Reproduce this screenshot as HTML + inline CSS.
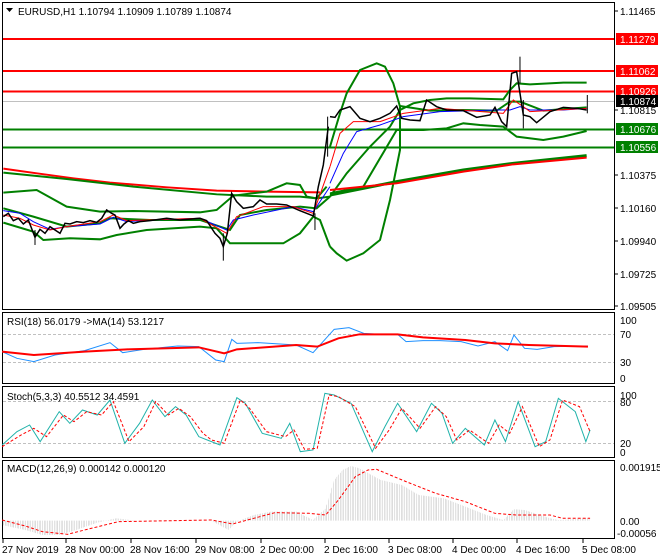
<!DOCTYPE html>
<html><head><meta charset="utf-8"><style>
body{margin:0;background:#fff;width:660px;height:560px;overflow:hidden;font-family:"Liberation Sans",sans-serif}
svg{position:absolute;left:0;top:0}
text{font-family:"Liberation Sans",sans-serif;font-size:10px;fill:#000}
.p{fill:none;vector-effect:non-scaling-stroke}
</style></head><body>
<svg width="660" height="560" viewBox="0 0 660 560">
<defs>
<pattern id="hb" width="4" height="10" patternUnits="userSpaceOnUse"><rect x="0" y="0" width="1" height="10" fill="#b8b8b8"/></pattern>
</defs>
<rect x="2.5" y="2.5" width="612" height="307" fill="none" stroke="#000"/>
<rect x="2.5" y="312.5" width="612" height="71" fill="none" stroke="#000"/>
<rect x="2.5" y="386.5" width="612" height="71" fill="none" stroke="#000"/>
<rect x="2.5" y="460.5" width="612" height="78" fill="none" stroke="#000"/>
<line x1="3" y1="101.5" x2="614" y2="101.5" stroke="#c0c0c0"/>
<line x1="3" y1="39" x2="614" y2="39" stroke="#f00" stroke-width="2"/>
<line x1="3" y1="71" x2="614" y2="71" stroke="#f00" stroke-width="2"/>
<line x1="3" y1="91.5" x2="614" y2="91.5" stroke="#f00" stroke-width="2"/>
<line x1="3" y1="129.5" x2="614" y2="129.5" stroke="#008000" stroke-width="2"/>
<line x1="3" y1="147.5" x2="614" y2="147.5" stroke="#008000" stroke-width="2"/>
<g transform="scale(0.3333)">
<polyline class="p" stroke="#f00" stroke-width="2" points="10,506 110,520 220,535 330,548 500,562 650,572 800,575 960,577"/>
<polyline class="p" stroke="#008000" stroke-width="2" points="10,518 200,537 400,560 650,583 800,590 900,590 950,595 990,590"/>
<polyline class="p" stroke="#008000" stroke-width="2" points="10,578 110,570 200,620 300,635 400,633 600,637 650,630 700,587 800,575 860,550 900,555 920,590 950,595 980,560"/>
<polyline class="p" stroke="#008000" stroke-width="2" points="10,668 100,695 130,720 210,715 300,718 350,705 440,690 600,680 650,685 690,730 850,730 900,700 940,650 960,660 990,740"/>
<polyline class="p" stroke="#008000" stroke-width="2" points="10,625 100,650 200,680 300,670 330,655 450,660 600,660 690,690 720,645 800,630 900,620 950,625 990,590"/>
<polyline class="p" stroke="#00f" stroke-width="1" points="10,632 60,640 100,665 150,688 200,680 300,672 340,652 380,665 450,660 600,655 680,690 700,660 760,645 880,620 940,635 990,560"/>
<polyline class="p" stroke="#f00" stroke-width="1" points="10,645 60,655 100,675 150,690 200,680 300,665 340,645 380,662 600,655 680,700 710,650 790,620 880,620 940,640 990,500"/>
<polyline class="p" stroke="#000" stroke-width="1.5" points="10,650 25,640 40,662 55,655 70,672 85,660 105,712 120,688 135,700 150,680 165,690 180,700 195,670 210,672 230,665 250,668 270,662 290,667 305,655 320,630 335,640 345,645 360,685 372,672 385,662 400,670 420,665 450,662 500,655 540,660 600,655 620,662 645,700 660,715 670,740 682,700 695,580 710,605 730,625 760,620 780,600 800,612 830,612 860,615 900,632 920,640 940,648 955,560 970,495 985,380"/>
<polyline class="p" stroke="#000" stroke-width="1" points="105,690 105,735"/>
<polyline class="p" stroke="#000" stroke-width="1" points="670,700 670,782"/>
<polyline class="p" stroke="#000" stroke-width="1" points="945,640 945,690"/>
<polyline class="p" stroke="#000" stroke-width="1" points="983,350 983,470"/>
</g>
<g transform="translate(330,0) scale(0.3333)">
<polyline class="p" stroke="#008000" stroke-width="2" points="0,440 30,340 50,280 90,210 140,190 165,200 190,250 210,320 210,450 180,600 150,720 100,760 50,782 20,760 0,740"/>
<polyline class="p" stroke="#008000" stroke-width="2" points="0,590 50,520 120,440 180,380 210,330 250,310 300,300 350,295 420,295 520,298 540,270 560,250 600,253 700,248 770,248"/>
<polyline class="p" stroke="#008000" stroke-width="2" points="0,580 100,560 200,390 280,390 350,385 400,370 450,375 520,380 540,395 560,410 640,420 700,410 770,393"/>
<polyline class="p" stroke="#008000" stroke-width="2" points="210,318 300,332 400,330 500,332 540,305 570,305 640,332 770,322"/>
<polyline class="p" stroke="#008000" stroke-width="3" points="0,585 200,545 400,510 550,490 770,467"/>
<polyline class="p" stroke="#f00" stroke-width="2" points="0,570 200,550 400,515 550,493 770,473"/>
<polyline class="p" stroke="#00f" stroke-width="1" points="0,550 40,460 80,395 150,375 220,350 330,335 500,330 540,330 570,320 600,330 700,330 770,325"/>
<polyline class="p" stroke="#f00" stroke-width="1" points="0,500 30,400 70,365 150,365 220,340 330,325 520,340 550,300 580,320 600,335 770,325"/>
<polyline class="p" stroke="#000" stroke-width="1.5" points="0,350 15,352 30,330 60,320 90,355 120,365 150,355 180,340 200,318 215,355 240,360 270,362 290,300 320,320 350,330 400,332 440,352 480,345 495,322 515,365 530,380 545,220 560,215 580,345 600,350 620,368 660,335 700,322 740,325 770,330"/>
<polyline class="p" stroke="#000" stroke-width="1" points="570,170 570,250"/>
<polyline class="p" stroke="#000" stroke-width="1" points="580,300 580,385"/>
<polyline class="p" stroke="#000" stroke-width="1" points="772,285 772,340"/>
</g>
<g>
<line x1="614" y1="11" x2="618" y2="11" stroke="#000"/><text x="620" y="15">1.11465</text>
<line x1="614" y1="110" x2="618" y2="110" stroke="#000"/><text x="620" y="114">1.10815</text>
<line x1="614" y1="175" x2="618" y2="175" stroke="#000"/><text x="620" y="179">1.10375</text>
<line x1="614" y1="208" x2="618" y2="208" stroke="#000"/><text x="620" y="212">1.10160</text>
<line x1="614" y1="241" x2="618" y2="241" stroke="#000"/><text x="620" y="245">1.09940</text>
<line x1="614" y1="274" x2="618" y2="274" stroke="#000"/><text x="620" y="278">1.09725</text>
<line x1="614" y1="306" x2="618" y2="306" stroke="#000"/><text x="620" y="310">1.09505</text>
<rect x="616" y="33" width="42" height="12" fill="#f00"/><text x="620" y="43" style="fill:#fff">1.11279</text>
<rect x="616" y="65" width="42" height="12" fill="#f00"/><text x="620" y="75" style="fill:#fff">1.11062</text>
<rect x="616" y="85" width="42" height="12" fill="#f00"/><text x="620" y="95" style="fill:#fff">1.10926</text>
<rect x="616" y="95" width="42" height="12" fill="#000"/><text x="620" y="105" style="fill:#fff">1.10874</text>
<rect x="616" y="123" width="42" height="12" fill="#008000"/><text x="620" y="133" style="fill:#fff">1.10676</text>
<rect x="616" y="141" width="42" height="12" fill="#008000"/><text x="620" y="151" style="fill:#fff">1.10556</text>
</g>
<path d="M6 8 L13 8 L9.5 12 Z" fill="#000"/>
<text x="18" y="15">EURUSD,H1  1.10794 1.10909 1.10789 1.10874</text>
<line x1="3" y1="334.5" x2="614" y2="334.5" stroke="#c0c0c0" stroke-dasharray="3,2"/>
<line x1="3" y1="362.5" x2="614" y2="362.5" stroke="#c0c0c0" stroke-dasharray="3,2"/>
<g transform="translate(0,300) scale(0.423,0.3333)">
<polyline class="p" stroke="#1e90ff" stroke-width="1" points="5,155 40,175 80,185 130,165 200,152 260,128 290,158 340,148 420,138 470,140 510,180 530,185 548,118 560,130 610,128 700,135 740,158 790,88 825,83 860,100 900,103 940,103 960,125 1000,122 1040,122 1090,125 1130,138 1170,125 1200,152 1215,105 1240,145 1270,148 1310,140 1390,138"/>
<polyline class="p" stroke="#f00" stroke-width="2" points="5,155 80,165 200,155 300,148 470,142 530,160 560,148 700,135 750,140 800,115 850,103 940,103 1000,112 1100,120 1170,130 1250,135 1390,140"/>
</g>
<text x="7" y="325">RSI(18) 56.0179  -&gt;MA(14) 53.1217</text>
<text x="620" y="324">100</text><text x="620" y="338">70</text><text x="620" y="366">30</text><text x="620" y="382">0</text>
<line x1="3" y1="401.5" x2="614" y2="401.5" stroke="#c0c0c0" stroke-dasharray="3,2"/>
<line x1="3" y1="443.5" x2="614" y2="443.5" stroke="#c0c0c0" stroke-dasharray="3,2"/>
<g transform="translate(0,300) scale(0.423,0.3333)">
<polyline class="p" stroke="#20b2aa" stroke-width="1" points="5,435 40,395 70,375 95,425 140,335 165,370 195,330 230,345 260,300 295,430 330,370 360,300 390,350 415,320 440,345 470,410 490,420 520,435 560,293 580,310 620,400 665,415 685,370 710,455 740,450 768,280 790,285 830,310 880,455 910,380 940,310 985,395 1020,310 1045,340 1070,430 1100,385 1145,435 1170,360 1195,425 1225,305 1265,440 1290,425 1320,295 1360,335 1385,425 1395,390"/>
<polyline class="p" stroke="#f00" stroke-width="1" stroke-dasharray="3,2" points="5,440 50,405 80,385 110,410 150,345 175,365 205,335 240,345 268,305 305,425 340,380 368,305 398,345 423,325 450,350 480,400 500,420 530,430 568,300 590,325 630,395 675,410 695,390 720,448 750,445 778,285 800,290 840,320 888,445 920,390 950,325 993,385 1030,320 1055,350 1080,420 1110,390 1155,430 1180,375 1205,400 1235,320 1275,440 1300,420 1330,300 1370,320 1395,395"/>
</g>
<text x="7" y="400">Stoch(5,3,3) 40.5512 34.4591</text>
<text x="620" y="399">100</text><text x="620" y="406">80</text><text x="620" y="447">20</text><text x="620" y="456">0</text>
<g transform="translate(0,300) scale(0.423,0.3333)">
<path d="M5,662 L5,675 60,690 100,705 140,705 180,690 230,668 275,655 320,662 500,662 540,690 560,665 600,645 640,635 700,635 740,660 770,625 790,540 810,510 830,498 850,505 900,540 950,555 990,585 1050,595 1100,620 1150,645 1190,660 1215,628 1240,630 1300,655 1320,660 1395,655 1395,662 Z" fill="url(#hb)"/>
<polyline class="p" stroke="#f00" stroke-width="1" stroke-dasharray="3,2" points="5,660 60,678 100,695 160,703 200,690 280,665 500,660 550,672 600,655 650,638 730,640 770,645 800,600 840,530 870,510 890,508 960,545 1030,580 1100,605 1170,640 1220,645 1300,645 1330,655 1395,655"/>
</g>
<text x="7" y="472">MACD(12,26,9) 0.000142 0.000120</text>
<text x="620" y="471">0.001915</text><text x="620" y="525">0.00</text><text x="617" y="537">-0.00056</text>
<g>
<line x1="3" y1="539" x2="3" y2="543" stroke="#000"/><text x="2" y="553">27 Nov 2019</text>
<line x1="66" y1="539" x2="66" y2="543" stroke="#000"/><text x="65" y="553">28 Nov 00:00</text>
<line x1="131" y1="539" x2="131" y2="543" stroke="#000"/><text x="130" y="553">28 Nov 16:00</text>
<line x1="196" y1="539" x2="196" y2="543" stroke="#000"/><text x="195" y="553">29 Nov 08:00</text>
<line x1="261" y1="539" x2="261" y2="543" stroke="#000"/><text x="260" y="553">2 Dec 00:00</text>
<line x1="325" y1="539" x2="325" y2="543" stroke="#000"/><text x="324" y="553">2 Dec 16:00</text>
<line x1="389" y1="539" x2="389" y2="543" stroke="#000"/><text x="388" y="553">3 Dec 08:00</text>
<line x1="453" y1="539" x2="453" y2="543" stroke="#000"/><text x="452" y="553">4 Dec 00:00</text>
<line x1="517" y1="539" x2="517" y2="543" stroke="#000"/><text x="516" y="553">4 Dec 16:00</text>
<line x1="583" y1="539" x2="583" y2="543" stroke="#000"/><text x="582" y="553">5 Dec 08:00</text>
</g>
</svg>
</body></html>
